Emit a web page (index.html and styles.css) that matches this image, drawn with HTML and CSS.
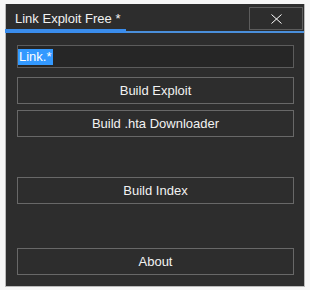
FILE: index.html
```html
<!DOCTYPE html>
<html>
<head>
<meta charset="utf-8">
<link rel="stylesheet" href="styles.css">
</head>
<body>
<div class="window">
  <div class="titlebar">
    <span class="title">Link Exploit Free *</span>
    <button class="close" type="button">
      <svg width="11" height="10" viewBox="0 0 11 10"><path d="M0.5 0.5 L10.5 9.5 M10.5 0.5 L0.5 9.5" stroke="#ffffff" stroke-width="1" fill="none"/></svg>
    </button>
  </div>
  <div class="tabline"><div class="tab"></div></div>
  <div class="content">
    <div class="field"><span class="sel">Link.*</span></div>
    <button class="btn first" type="button">Build Exploit</button>
    <button class="btn" type="button">Build .hta Downloader</button>
    <button class="btn index" type="button">Build Index</button>
    <button class="btn about" type="button">About</button>
  </div>
</div>
</body>
</html>
```
FILE: styles.css
```css
html, body {
  margin: 0;
  padding: 0;
  background: #f6f6f6;
  font-family: "Liberation Sans", Arial, sans-serif;
  font-size: 13px;
}
.window {
  box-sizing: border-box;
  margin: 4px 0 0 5px;
  width: 300px;
  height: 283px;
  background: #2d2d2d;
  border: 1px solid #b9b9b9;
  border-top: none;
  display: flex;
  flex-direction: column;
}
.titlebar {
  height: 25px;
  display: flex;
  align-items: flex-start;
  justify-content: space-between;
}
.title {
  color: #f2f2f2;
  margin: 7px 0 0 9px;
  line-height: 15px;
}
.close {
  box-sizing: border-box;
  width: 54px;
  height: 23px;
  margin: 3px 1px 0 0;
  background: transparent;
  border: 1px solid #5c5c5c;
  padding: 0;
  display: flex;
  align-items: center;
  justify-content: center;
}
.tabline {
  height: 4px;
  display: flex;
  align-items: flex-end;
  background: linear-gradient(to bottom, transparent 0, transparent 2px, #4a8fdb 2px, #4a8fdb 4px);
  margin-left: -1px;
}
.tab {
  width: 121px;
  height: 4px;
  background: #3a8ded;
}
.content {
  display: flex;
  flex-direction: column;
  padding: 12px 10px 0 11px;
}
.field {
  box-sizing: border-box;
  height: 23px;
  border: 1px solid #5c5c5c;
  background: #262626;
  display: flex;
  align-items: center;
  padding-left: 0;
}
.sel {
  background: #3399ff;
  color: #ffffff;
  line-height: 16px;
  padding: 0 1px;
}
.btn {
  box-sizing: border-box;
  height: 27px;
  background: #2d2d2d;
  border: 1px solid #686868;
  color: #f2f2f2;
  font-family: "Liberation Sans", Arial, sans-serif;
  font-size: 13px;
  padding: 0;
  margin-top: 6px;
}
.btn.first { margin-top: 9px; }
.btn.index { margin-top: 40px; }
.btn.about { margin-top: 44px; }
```
